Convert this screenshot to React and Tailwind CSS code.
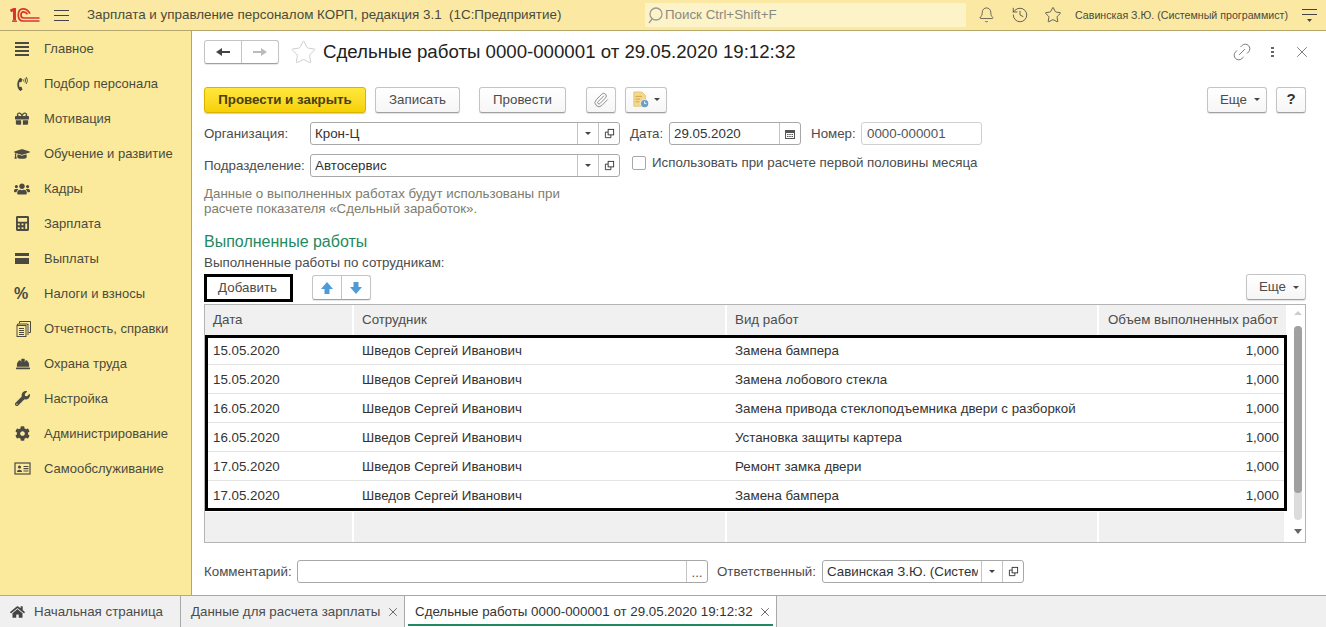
import React from "react";
import { FaPhoneVolume, FaGift, FaGraduationCap, FaUsers, FaCalculator, FaHardHat, FaWrench, FaCog, FaHome } from "react-icons/fa";
import { Bell, History, Star, Link2, X, Paperclip } from "lucide-react";

const cls = "w-[20px] h-[20px] text-[#4a4a42]";
const Bars = () => (
  <svg viewBox="0 0 20 20" className={cls} fill="currentColor">
    <rect x="1" y="3" width="14" height="2" /><rect x="1" y="7" width="14" height="2" /><rect x="1" y="11" width="14" height="2" /><rect x="1" y="15" width="14" height="2" />
  </svg>
);
const Card = () => (
  <svg viewBox="0 0 20 20" className={cls} fill="currentColor">
    <path d="M1 4h14v3H1zM1 9h14v6H1z" />
  </svg>
);
const Percent = () => (
  <span className="w-[20px] text-[16px] font-bold leading-[20px] text-[#4a4a42]">%</span>
);
const Docs = () => (
  <svg viewBox="0 0 20 20" className={cls} fill="none" stroke="currentColor" strokeWidth="1">
    <path d="M5.5 4.5V2.5h11v11h-2M3.5 6.5V5h10v1" />
    <rect x="3" y="6.5" width="9" height="11" />
    <path d="M5 9.5h5M5 11.5h5M5 13.5h5M5 15.5h5" />
    <path d="M14 5v11" />
  </svg>
);
const Id = () => (
  <svg viewBox="0 0 20 20" className="w-[20px] h-[20px] text-[#4a4a42]" fill="none" stroke="currentColor" strokeWidth="1.2">
    <rect x="1" y="4" width="15" height="11" />
    <circle cx="5.5" cy="8" r="1.6" fill="currentColor" stroke="none" />
    <path d="M3 13c0-3 5-3 5 0z" fill="currentColor" stroke="none" />
    <path d="M9.5 7.5h5M9.5 9.7h5M9.5 12h5" />
  </svg>
);
const menu = [
  ["Главное", <Bars />],
  ["Подбор персонала", <FaPhoneVolume className="w-[13px] h-[14px] text-[#4a4a42] ml-[2px] mr-[5px]" />],
  ["Мотивация", <FaGift className="w-[14px] h-[15px] text-[#4a4a42] ml-[1px] mr-[5px]" />],
  ["Обучение и развитие", <FaGraduationCap className="w-[16px] h-[16px] text-[#4a4a42] mr-[4px]" />],
  ["Кадры", <FaUsers className="w-[16px] h-[16px] text-[#4a4a42] mr-[4px]" />],
  ["Зарплата", <FaCalculator className="w-[13px] h-[15px] text-[#4a4a42] ml-[2px] mr-[5px]" />],
  ["Выплаты", <Card />],
  ["Налоги и взносы", <Percent />],
  ["Отчетность, справки", <Docs />],
  ["Охрана труда", <FaHardHat className="w-[14px] h-[14px] text-[#4a4a42] ml-[2px] mr-[4px]" />],
  ["Настройка", <FaWrench className="w-[15px] h-[15px] text-[#4a4a42] ml-[1px] mr-[4px]" />],
  ["Администрирование", <FaCog className="w-[15px] h-[15px] text-[#4a4a42] ml-[1px] mr-[4px]" />],
  ["Самообслуживание", <Id />],
];

const Logo = () => (
  <svg viewBox="0 0 30 14" className="w-[30px] h-[14px] text-[#d9352c]" fill="none" stroke="currentColor">
    <path d="M0.5 3L4.5 1.2V12.5" strokeWidth="3" />
    <path d="M2 13.2h5" strokeWidth="1.4" />
    <path d="M20 5.6C18 2 15 0.9 13 0.9C10 0.9 8.3 3.6 8.3 7C8.3 10.5 10 13 13 13H29.5" strokeWidth="1.7" />
    <path d="M17.5 6.3C16.5 4.8 15 3.8 13.5 3.8C11.7 3.8 11 5.5 11 7C11 8.8 12 10 13.5 10H29.5" strokeWidth="1.7" />
  </svg>
);

const Caret = ({ className = "" }) => (
  <span className={`w-0 h-0 border-x-[3px] border-x-transparent border-t-[3px] border-t-[#444] ${className}`} />
);

const Open = () => (
  <svg viewBox="0 0 12 12" className="w-[11px] h-[11px] text-[#333]" fill="none" stroke="currentColor" strokeWidth="1">
    <rect x="4.5" y="1.5" width="6" height="6" />
    <path d="M4.5 4.5H1.5V10.5H7.5V7.5" />
  </svg>
);

const Btn = ({ children, className = "" }) => (
  <button className={`flex items-center justify-center h-[26px] rounded-[3px] border border-[#c4c4c4] border-b-[#a0a0a0] bg-gradient-to-b from-white to-[#f6f6f6] shadow-[0_1px_1px_rgba(0,0,0,0.12)] text-[#4c4c4c] ${className}`}>
    {children}
  </button>
);

const Select = ({ value, className = "" }) => (
  <div className={`flex h-[23px] rounded-[3px] border border-[#a8a8a8] bg-white ${className}`}>
    <div className="flex-1 min-w-0 ml-[4px] mr-[3px] leading-[21px] text-[#333] overflow-hidden whitespace-nowrap">{value}</div>
    <div className="w-[21px] border-l border-[#c4c4c4] flex items-center justify-center"><Caret /></div>
    <div className="w-[21px] border-l border-[#c4c4c4] flex items-center justify-center"><Open /></div>
  </div>
);

const rows = [
  ["15.05.2020", "Замена бампера", "h-[27px] pb-[1px] border-b border-[#e4e4e4]"],
  ["15.05.2020", "Замена лобового стекла", "h-[29px] pt-[1px] border-b border-[#e4e4e4]"],
  ["16.05.2020", "Замена привода стеклоподъемника двери с разборкой", "h-[29px] pt-[1px] border-b border-[#e4e4e4]"],
  ["16.05.2020", "Установка защиты картера", "h-[29px] pt-[1px] border-b border-[#e4e4e4]"],
  ["17.05.2020", "Ремонт замка двери", "h-[29px] pt-[1px] border-b border-[#e4e4e4]"],
  ["17.05.2020", "Замена бампера", "h-[27px] pt-[3px]"],
];

const DocIcon = () => (
  <svg viewBox="0 0 20 20" className="w-[18px] h-[18px]">
    <path d="M2 1h9l4 4v12H2z" fill="#f4d98b" stroke="#d9b860" strokeWidth="0.7" />
    <path d="M4 6h7M4 9h5M4 12h4" stroke="#c9a24a" strokeWidth="1" />
    <circle cx="14" cy="14" r="4.5" fill="#6f9fc4" stroke="#fff" strokeWidth="0.8" />
    <path d="M14 11.5V14h2" stroke="#fff" strokeWidth="1" fill="none" />
  </svg>
);

const ArrowBtn = ({ down }) => (
  <svg viewBox="0 0 14 14" className="w-[14px] h-[14px]" style={{ transform: down ? "rotate(180deg)" : undefined }}>
    <path d="M7 1L13 8H9.5V13H4.5V8H1Z" fill="#4f9bd8" />
  </svg>
);

export default function App() {
  return (
    <div className="w-[1326px] h-[627px] flex flex-col overflow-hidden bg-white text-[13.33px] text-[#4c4c4c] font-['Liberation_Sans',Arial,sans-serif]">
      {/* Top bar */}
      <header className="h-[31px] shrink-0 flex items-center bg-[#fbe9a3] border-b border-[#b5a76c]">
        <div className="ml-[10px]"><Logo /></div>
        <svg viewBox="0 0 15 12" className="ml-[14px] w-[15px] h-[12px] text-[#444]" stroke="currentColor" strokeWidth="1">
          <path d="M0 1.5h15M0 6.5h15M0 11.5h15" />
        </svg>
        <div className="ml-[18px] w-[558px] text-[13.4px] text-[#4a4a3c] whitespace-nowrap">Зарплата и управление персоналом КОРП, редакция 3.1&nbsp;&nbsp;(1С:Предприятие)</div>
        <div className="flex items-center w-[321px] h-[24px] bg-[#fdf3c9] text-[#8a8a80] pl-[2px]">
          <svg viewBox="0 0 18 18" className="w-[18px] h-[18px]" fill="none" stroke="#9a9a90" strokeWidth="1.3"><circle cx="9" cy="8" r="6" /><path d="M5 13l-3 4" /></svg>
          <span>Поиск Ctrl+Shift+F</span>
        </div>
        <Bell className="ml-[12px] w-[17px] h-[18px] text-[#444]" strokeWidth={1.1} />
        <History className="ml-[16px] w-[18px] h-[18px] text-[#444]" strokeWidth={1.1} />
        <Star className="ml-[15px] w-[18px] h-[18px] text-[#444]" strokeWidth={1.1} />
        <div className="ml-[13px] text-[10.67px] text-[#4a4a3c] whitespace-nowrap w-[222px]">Савинская З.Ю. (Системный программист)</div>
        <svg viewBox="0 0 15 14" className="ml-[5px] w-[15px] h-[14px] text-[#444]" stroke="currentColor" fill="currentColor" strokeWidth="1">
          <path d="M0 1.5h15M0 6.5h15" /><path d="M5 11h5l-2.5 3z" stroke="none" />
        </svg>
      </header>

      <div className="flex-1 min-h-0 flex">
        {/* Sidebar */}
        <aside className="w-[192px] shrink-0 bg-[#fcea9c] border-r border-[#b5a76c] text-[13px] text-[#4a4a3c]">
          {menu.map(([t, icon]) => (
            <div key={t} className="h-[35px] flex items-center pl-[14px]">
              <div className="w-[30px] flex items-center">{icon}</div>
              <span className="whitespace-nowrap">{t}</span>
            </div>
          ))}
        </aside>

        {/* Form */}
        <main className="flex-1 min-w-0 pl-[12px] pr-[20px] pt-[9px] flex flex-col">
          <div className="flex items-center h-[24px]">
            <div className="flex h-[24px] w-[75px] rounded-[3px] border border-[#c4c4c4] border-b-[#a0a0a0] shadow-[0_1px_1px_rgba(0,0,0,0.1)]">
              <div className="flex-1 flex items-center justify-center border-r border-[#c4c4c4]">
                <svg viewBox="0 0 14 10" className="w-[14px] h-[10px]" fill="#444"><path d="M0 5L6 1V4H14V6H6V9Z" /></svg>
              </div>
              <div className="flex-1 flex items-center justify-center">
                <svg viewBox="0 0 14 10" className="w-[14px] h-[10px]" fill="#bbb"><path d="M14 5L8 1V4H0V6H8V9Z" /></svg>
              </div>
            </div>
            <Star className="ml-[11px] w-[27px] h-[27px] text-[#c8c8c8]" strokeWidth={0.8} />
            <h1 className="ml-[6px] text-[18.67px] leading-[24px] text-[#222] whitespace-nowrap">Сдельные работы 0000-000001 от 29.05.2020 19:12:32</h1>
            <div className="ml-auto flex items-center text-[#777]">
              <Link2 className="w-[22px] h-[22px] -rotate-45" strokeWidth={1} />
              <div className="ml-[18px] flex flex-col gap-[2px]">
                <span className="w-[3px] h-[2px] bg-[#666]" /><span className="w-[3px] h-[2px] bg-[#666]" /><span className="w-[3px] h-[2px] bg-[#666]" />
              </div>
              <X className="ml-[19px] mr-[-5px] w-[18px] h-[18px] text-[#555]" strokeWidth={1} />
            </div>
          </div>

          <div className="flex items-center mt-[22px] h-[27px]">
            <button className="w-[162px] h-[26px] rounded-[3px] border border-[#d9b400] bg-gradient-to-b from-[#ffe83a] to-[#f7d000] shadow-[0_1px_1px_rgba(0,0,0,0.2)] font-bold text-[#4a4010]">Провести и закрыть</button>
            <Btn className="ml-[9px] w-[85px]">Записать</Btn>
            <Btn className="ml-[19px] w-[87px]">Провести</Btn>
            <Btn className="ml-[20px] w-[30px]"><Paperclip className="w-[16px] h-[16px] text-[#888]" strokeWidth={1.4} /></Btn>
            <Btn className="ml-[9px] w-[42px] gap-[4px]"><DocIcon /><Caret /></Btn>
            <Btn className="ml-auto w-[60px] gap-[7px] !justify-end pr-[6px]">Еще <Caret /></Btn>
            <Btn className="ml-[9px] w-[30px] font-bold text-[15px] text-[#333]">?</Btn>
          </div>

          <div className="flex items-center mt-[9px] h-[23px]">
            <span className="w-[106px]">Организация:</span>
            <Select value="Крон-Ц" className="w-[310px]" />
            <span className="ml-[10px] w-[39px]">Дата:</span>
            <div className="flex h-[23px] w-[132px] rounded-[3px] border border-[#a8a8a8]">
              <div className="flex-1 pl-[4px] leading-[21px] text-[#333]">29.05.2020</div>
              <div className="w-[21px] border-l border-[#c4c4c4] flex items-center justify-center">
                <svg viewBox="0 0 10 10" className="w-[10px] h-[10px]" fill="#555"><path d="M0 1h10v9H0zM1 4v5h8V4zM2 5h1.5v1H2zM4.2 5h1.5v1H4.2zM6.5 5H8v1H6.5zM2 7h1.5v1H2zM4.2 7h1.5v1H4.2zM6.5 7H8v1H6.5z" fillRule="evenodd" /></svg>
              </div>
            </div>
            <span className="ml-[10px] w-[50px]">Номер:</span>
            <div className="h-[23px] w-[121px] rounded-[3px] border border-[#d0d0d0] pl-[5px] leading-[21px] text-[#555]">0000-000001</div>
          </div>

          <div className="flex items-center mt-[9px] h-[23px]">
            <span className="w-[106px]">Подразделение:</span>
            <Select value="Автосервис" className="w-[310px]" />
            <span className="ml-[12px] mb-[6px] w-[14px] h-[14px] rounded-[2px] border border-[#a8a8a8]" />
            <span className="ml-[6px] mb-[6px] whitespace-nowrap">Использовать при расчете первой половины месяца</span>
          </div>

          <p className="mt-[9px] leading-[15px] text-[#7d7d6e] w-[400px]">Данные о выполненных работах будут использованы при<br />расчете показателя «Сдельный заработок».</p>

          <h2 className="mt-[16px] text-[16px] leading-[20px] text-[#1f8a5f]">Выполненные работы</h2>
          <div className="mt-[3px] leading-[15px]">Выполненные работы по сотрудникам:</div>

          <div className="flex items-start mt-[4px] h-[29px]">
            <button className="w-[89px] h-[28px] border-[3px] border-black bg-white pr-[2px]">Добавить</button>
            <div className="ml-[19px] mt-[1px] flex w-[59px] h-[25px] rounded-[3px] border border-[#c4c4c4] border-b-[#a0a0a0] shadow-[0_1px_1px_rgba(0,0,0,0.1)]">
              <div className="flex-1 flex items-center justify-center border-r border-[#c4c4c4]"><ArrowBtn /></div>
              <div className="flex-1 flex items-center justify-center"><ArrowBtn down /></div>
            </div>
            <Btn className="ml-auto w-[60px] gap-[7px] !justify-end pr-[6px]">Еще <Caret /></Btn>
          </div>

          {/* Table */}
          <div className="mt-[1px] h-[239px] border border-[#b4b4b4] flex">
            <div className="w-[1081px] flex flex-col">
              <div className="h-[30px] flex bg-[#f0f0f0] shrink-0">
                <div className="w-[149px] border-r-2 border-white pl-[8px] leading-[29px]">Дата</div>
                <div className="w-[373px] border-r-2 border-white pl-[8px] leading-[29px]">Сотрудник</div>
                <div className="w-[372px] border-r-2 border-white pl-[8px] leading-[29px]">Вид работ</div>
                <div className="flex-1 pr-[8px] text-right leading-[29px] whitespace-nowrap">Объем выполненных работ</div>
              </div>
              <div className="h-[176px] border-[3px] border-black shrink-0 -mr-[1px]">
                {rows.map(([d, w, rowCls], i) => (
                  <div key={i} className={`flex items-center ${rowCls}`}>
                    <div className="w-[146px] pl-[5px] text-[#333]">{d}</div>
                    <div className="w-[373px] pl-[8px] text-[#333]">Шведов Сергей Иванович</div>
                    <div className="w-[372px] pl-[8px] text-[#333] whitespace-nowrap">{w}</div>
                    <div className="flex-1 pr-[5px] text-right text-[#333]">1,000</div>
                  </div>
                ))}
              </div>
              <div className="mt-[1px] flex-1 flex bg-[#f0f0f0]">
                <div className="w-[149px] border-r-2 border-white" />
                <div className="w-[373px] border-r-2 border-white" />
                <div className="w-[372px] border-r-2 border-white" />
                <div className="flex-1 border-r-2 border-white" />
              </div>
            </div>
            <div className="flex-1 flex flex-col items-center pl-[4px] pt-[6px]">
              <Caret className="rotate-180 !border-t-[#ccc] !border-x-[4px] !border-t-[4px]" />
              <div className="mt-[11px] w-[8px] h-[194px] rounded-full bg-[#dcdcdc]">
                <div className="w-[8px] h-[167px] rounded-full bg-[#a0a0a0]" />
              </div>
              <Caret className="mt-[9px] !border-t-[#666] !border-x-[4px] !border-t-[5px]" />
            </div>
          </div>

          <div className="flex items-center mt-[17px] h-[23px]">
            <span className="w-[93px]">Комментарий:</span>
            <div className="flex h-[23px] w-[411px] rounded-[3px] border border-[#a8a8a8]">
              <div className="flex-1" />
              <div className="w-[21px] border-l border-[#c4c4c4] text-center leading-[24px] text-[#555]">...</div>
            </div>
            <span className="ml-[9px] w-[105px]">Ответственный:</span>
            <Select value="Савинская З.Ю. (Систем" className="w-[202px]" />
          </div>
        </main>
      </div>

      {/* Tabs */}
      <footer className="h-[32px] shrink-0 flex bg-[#f0f0f0] border-t border-[#a8a8a8] text-[#4c4c4c]">
        <div className="w-[181px] flex items-center pl-[10px] border-r border-[#a8a8a8]">
          <FaHome className="w-[15px] h-[14px] text-[#444]" />
          <span className="ml-[9px]">Начальная страница</span>
        </div>
        <div className="w-[224px] flex items-center pl-[10px] border-r border-[#a8a8a8] whitespace-nowrap">
          <span>Данные для расчета зарплаты</span>
          <X className="ml-[6px] w-[14px] h-[14px]" strokeWidth={1.4} />
        </div>
        <div className="relative w-[372px] flex items-center pl-[10px] bg-white border-r border-[#a8a8a8] whitespace-nowrap">
          <span className="text-[#333]">Сдельные работы 0000-000001 от 29.05.2020 19:12:32</span>
          <X className="ml-[5px] w-[14px] h-[14px]" strokeWidth={1.4} />
          <span className="absolute left-[3px] right-[3px] bottom-[1px] h-[2px] bg-[#1f8a5f]" />
        </div>
      </footer>
    </div>
  );
}
